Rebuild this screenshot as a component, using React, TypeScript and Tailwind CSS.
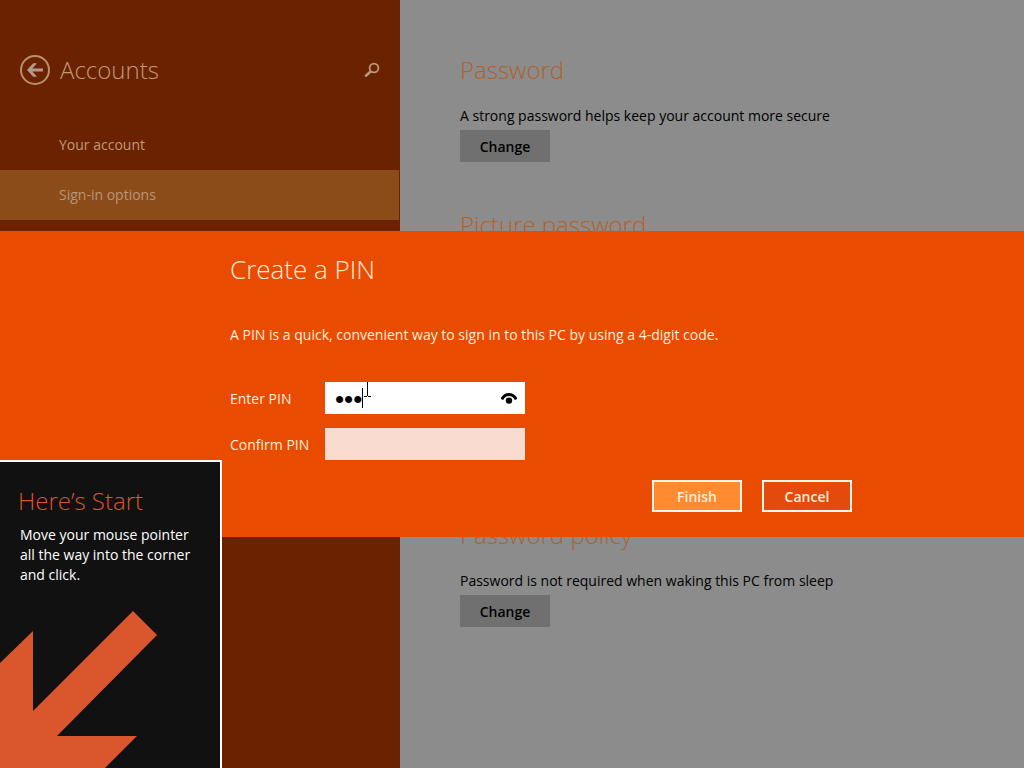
import { useState } from "react";

interface SectionProps {
  title: string;
  text?: string;
  className?: string;
}

const navItems = ["Your account", "Sign-in options"];

function Section({ title, text, className = "" }: SectionProps) {
  return (
    <section className={className}>
      <h2 className="text-[24px] leading-[29px] font-light text-[#b0622a]">{title}</h2>
      {text && (
        <>
          <p className="mt-[22px] text-[14px] leading-5">{text}</p>
          <button
            type="button"
            className="mt-1 h-8 w-[90px] bg-[#707070] text-[14px] font-semibold text-black"
          >
            Change
          </button>
        </>
      )}
    </section>
  );
}

function Sidebar() {
  const [active, setActive] = useState("Sign-in options");

  return (
    <aside className="w-[400px] shrink-0 bg-[#6a2200] text-[#c09a7c]">
      <header className="flex items-center pt-[55px] pl-5 pr-5">
        <button type="button" aria-label="Back">
          <svg width="30" height="30" viewBox="0 0 30 30" fill="none">
            <circle cx="15" cy="15" r="14" stroke="#b9906c" strokeWidth="2" />
            <path
              d="M7 15L13.2 8.2H17L12.3 13.4H23V16.6H12.3L17 21.8H13.2Z"
              fill="#b49a8c"
            />
          </svg>
        </button>
        <h1 className="ml-[10px] text-[24px] leading-[30px] font-light">Accounts</h1>
        <button type="button" aria-label="Search" className="ml-auto">
          <svg width="16" height="16" viewBox="0 0 16 16" fill="none" stroke="#b9997f">
            <circle cx="10" cy="6" r="4.4" strokeWidth="1.8" />
            <path d="M6.8 9.2L1.2 14.4" strokeWidth="2.6" />
          </svg>
        </button>
      </header>
      <nav className="mt-[35px] pr-px">
        {navItems.map((item) => (
          <a
            key={item}
            href="#"
            onClick={() => setActive(item)}
            className={`block h-[50px] pt-[15px] pl-[59px] text-[14px] leading-5 ${
              item === active ? "bg-[#8c4c1a] text-[#b8957a]" : ""
            }`}
          >
            {item}
          </a>
        ))}
      </nav>
    </aside>
  );
}

function PinDialog() {
  const [pin, setPin] = useState("123");
  const [confirm, setConfirm] = useState("");

  return (
    <div className="fixed inset-0 flex items-center">
      <div role="dialog" aria-labelledby="pin-title" className="w-full bg-[#e94b00] text-[#ffeedd]">
        <form
          onSubmit={(e) => e.preventDefault()}
          className="ml-[230px] max-w-[622px] pt-[23px] pb-[25px]"
        >
          <h2 id="pin-title" className="text-[26px] leading-[31px] font-light">
            Create a PIN
          </h2>
          <p className="mt-10 text-[14px] leading-5">
            A PIN is a quick, convenient way to sign in to this PC by using a 4-digit code.
          </p>

          <div className="mt-[37px] flex items-center">
            <label htmlFor="pin" className="w-[95px] text-[14px]">
              Enter PIN
            </label>
            <div className="relative">
              <input
                id="pin"
                type="password"
                value={pin}
                onChange={(e) => setPin(e.target.value)}
                className="block h-8 w-[200px] bg-white pt-0.5 pl-[10px] pr-8 font-['Liberation_Sans',sans-serif] text-[26px] text-black outline-none"
              />
              {/* text caret and mouse pointer */}
              <svg
                width="12"
                height="32"
                viewBox="0 0 12 32"
                className="pointer-events-none absolute top-0 left-9"
                stroke="#000"
                shapeRendering="crispEdges"
              >
                <path d="M1.5 6V26M6.5 0V14M3 14.5H6M7 14.5H10" />
              </svg>
              <button type="button" aria-label="Show PIN" className="absolute top-2 right-2">
                <svg width="16" height="16" viewBox="0 0 16 16" fill="none">
                  <path d="M0.8 9.4C4 2.8 12 2.8 15.2 9.4" stroke="#000" strokeWidth="3" />
                  <circle cx="8" cy="10.6" r="3.2" fill="#000" />
                </svg>
              </button>
            </div>
          </div>

          <div className="mt-[14px] flex items-center">
            <label htmlFor="confirm" className="w-[95px] text-[14px]">
              Confirm PIN
            </label>
            <input
              id="confirm"
              type="password"
              value={confirm}
              onChange={(e) => setConfirm(e.target.value)}
              className="block h-8 w-[200px] bg-[#fadbcf] pt-0.5 px-[10px] font-['Liberation_Sans',sans-serif] text-[26px] text-black outline-none"
            />
          </div>

          <div className="mt-5 flex justify-end gap-5 text-[14px] font-semibold">
            <button type="submit" className="h-8 w-[90px] border-2 border-[#fff6ea] bg-[#ff8a30]">
              Finish
            </button>
            <button type="button" className="h-8 w-[90px] border-2 border-[#fff6ea] bg-[#e34a0c]">
              Cancel
            </button>
          </div>
        </form>
      </div>
    </div>
  );
}

function StartTip() {
  return (
    <div className="fixed bottom-0 left-0 w-[222px] border-t-2 border-r-2 border-white bg-[#111]">
      <h2 className="pt-6 pl-[18px] text-[24px] leading-[29px] font-light text-[#d95530]">
        Here’s Start
      </h2>
      <p className="mt-[10px] px-5 text-[14px] leading-5 text-white">
        Move your mouse pointer all the way into the corner and click.
      </p>
      <svg width="160" height="160" viewBox="0 0 160 160" className="mt-[23px] block">
        <path
          d="M0 55L33 23V103L133 3L157 27L57 128H137L105 160H0Z"
          fill="#da572e"
        />
      </svg>
    </div>
  );
}

export default function App() {
  return (
    <div className="flex min-h-screen bg-[#8c8c8c] font-['Open_Sans','Noto_Sans',sans-serif] text-black">
      <Sidebar />
      <main className="flex flex-1 flex-col gap-12 pt-[55px] pl-[60px]">
        <Section title="Password" text="A strong password helps keep your account more secure" />
        <Section title="Picture password" className="min-h-[262px]" />
        <Section
          title="Password policy"
          text="Password is not required when waking this PC from sleep"
        />
      </main>
      <PinDialog />
      <StartTip />
    </div>
  );
}
